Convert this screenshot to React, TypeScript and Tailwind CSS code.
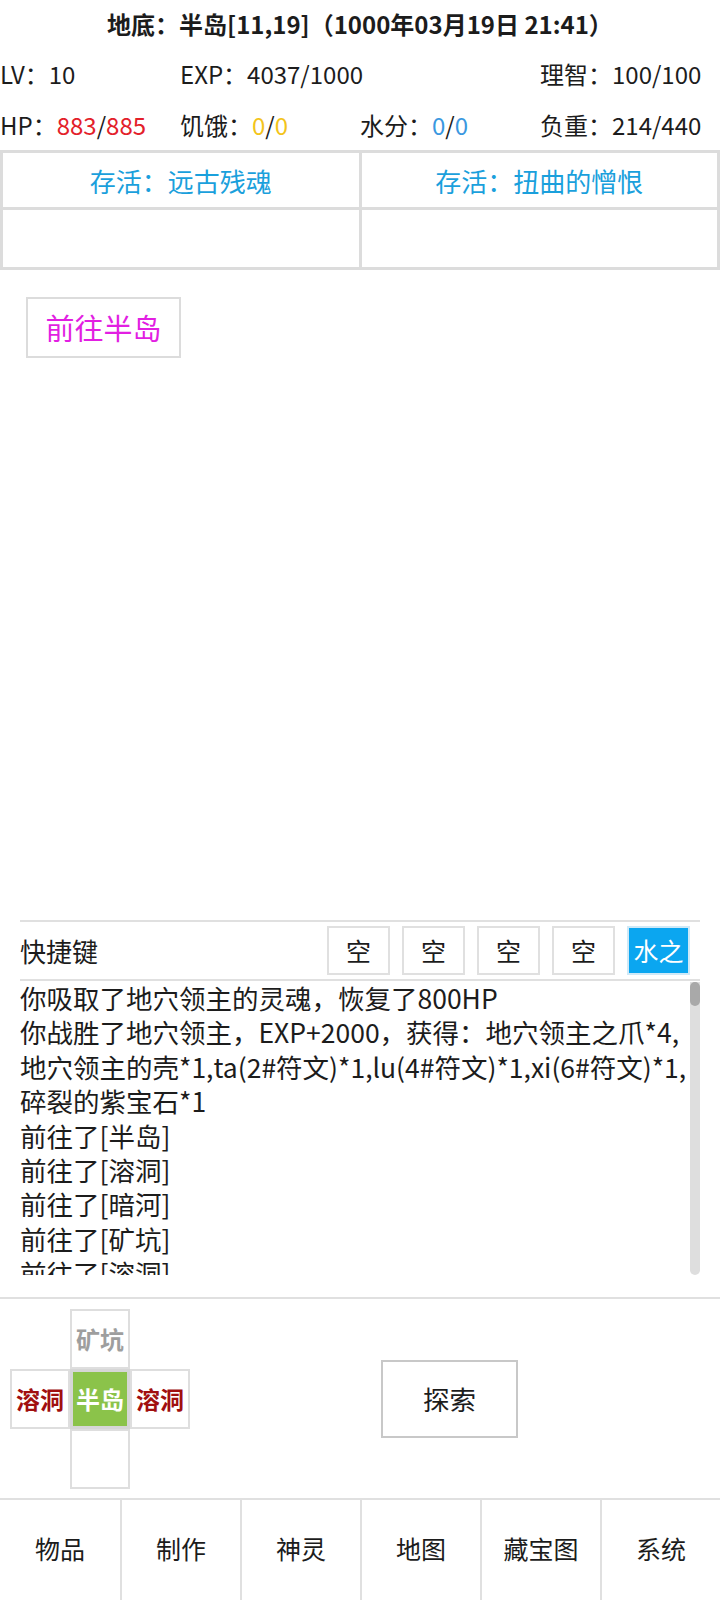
import React from 'react';

const logLines = [
  '你吸取了地穴领主的灵魂，恢复了800HP',
  '你战胜了地穴领主，EXP+2000，获得：地穴领主之爪*4,',
  '地穴领主的壳*1,ta(2#符文)*1,lu(4#符文)*1,xi(6#符文)*1,',
  '碎裂的紫宝石*1',
  '前往了[半岛]',
  '前往了[溶洞]',
  '前往了[暗河]',
  '前往了[矿坑]',
  '前往了[溶洞]',
];

const shortcuts = ['空', '空', '空', '空'];
const navItems = ['物品', '制作', '神灵', '地图', '藏宝图', '系统'];

function Stat({ label, children }: { label: string; children: React.ReactNode }) {
  return (
    <div className="flex items-center whitespace-nowrap">
      <span>{label}：</span>
      {children}
    </div>
  );
}

export default function App() {
  return (
    <div className="h-[1600px] w-[720px] flex flex-col bg-white text-[#1c1c1c] font-['Noto_Sans_CJK_SC','Noto_Sans',sans-serif] overflow-hidden">
      {/* title */}
      <div className="h-[48px] flex items-center justify-center text-[24px] font-bold whitespace-nowrap">
        地底：半岛[11,19]（1000年03月19日 21:41）
      </div>

      {/* stats */}
      <div className="grid grid-cols-4 text-[24px]">
        <div className="h-[51px] flex items-center"><Stat label="LV">10</Stat></div>
        <div className="h-[51px] flex items-center"><Stat label="EXP">4037/1000</Stat></div>
        <div className="h-[51px]" />
        <div className="h-[51px] flex items-center"><Stat label="理智">100/100</Stat></div>
        <div className="h-[51px] flex items-center">
          <Stat label="HP">
            <span className="text-[#e3202a]">883</span>/<span className="text-[#e3202a]">885</span>
          </Stat>
        </div>
        <div className="h-[51px] flex items-center">
          <Stat label="饥饿">
            <span className="text-[#f3c41a]">0</span>/<span className="text-[#f3c41a]">0</span>
          </Stat>
        </div>
        <div className="h-[51px] flex items-center">
          <Stat label="水分">
            <span className="text-[#3a98e0]">0</span>/<span className="text-[#3a98e0]">0</span>
          </Stat>
        </div>
        <div className="h-[51px] flex items-center"><Stat label="负重">214/440</Stat></div>
      </div>

      {/* survival table */}
      <div className="grid grid-cols-2 gap-[3px] p-[3px] bg-[#dcdcdc] text-[26px] text-[#1aa0dc]">
        <div className="h-[54px] bg-white flex items-center justify-center">存活：远古残魂</div>
        <div className="h-[54px] bg-white flex items-center justify-center">存活：扭曲的憎恨</div>
        <div className="h-[57px] bg-white" />
        <div className="h-[57px] bg-white" />
      </div>

      <div className="pt-[27px] pl-[26px]">
        <button className="w-[155px] h-[61px] border-2 border-[#dcdcdc] text-[29px] text-[#e21fe2] flex items-center justify-center">
          前往半岛
        </button>
      </div>

      <div className="flex-1" />

      {/* shortcuts */}
      <div className="mx-[20px] border-t-2 border-b-2 border-[#e0e0e0] h-[61px] flex items-center pr-[10px]">
        <span className="text-[26px] flex-1">快捷键</span>
        <div className="flex gap-[12px]">
          {shortcuts.map((s, i) => (
            <div key={i} className="w-[63px] h-[49px] border-2 border-[#e0e0e0] flex items-center justify-center text-[25px]">
              {s}
            </div>
          ))}
          <div className="w-[63px] h-[49px] border-2 border-[#cfe9f7] bg-[#0ba6f0] text-white flex items-center justify-center text-[25px]">
            水之
          </div>
        </div>
      </div>

      {/* log */}
      <div className="mx-[20px] h-[294px] flex overflow-hidden">
        <div className="flex-1 text-[26.5px] leading-[34.4px] whitespace-nowrap overflow-hidden">
          {logLines.map((l, i) => (
            <div key={i}>{l}</div>
          ))}
        </div>
        <div className="w-[10px] mt-[1px] h-[293px] bg-[#dedede] rounded-b-[5px] flex flex-col">
          <div className="h-[24px] bg-[#a9a9a9] rounded-[5px]" />
        </div>
      </div>

      {/* map + explore */}
      <div className="mt-[22px] border-t-2 border-[#e0e0e0] h-[201px] flex items-center">
        <div className="ml-[10px] grid grid-cols-[60px_60px_60px] grid-rows-[60px_60px_60px] text-[24px] font-bold">
          <div />
          <div className="border-2 border-[#dedede] flex items-center justify-center text-[#9e9e9e]">矿坑</div>
          <div />
          <div className="border-2 border-[#dedede] flex items-center justify-center text-[#a10f0f]">溶洞</div>
          <div className="border-[3px] border-[#d6d6d6] bg-[#8bc34a] flex items-center justify-center text-white">半岛</div>
          <div className="border-2 border-[#dedede] flex items-center justify-center text-[#a10f0f]">溶洞</div>
          <div />
          <div className="border-2 border-[#dedede]" />
          <div />
        </div>
        <button className="ml-[191px] w-[137px] h-[78px] border-2 border-[#c8c8c8] text-[26.5px] flex items-center justify-center">
          探索
        </button>
      </div>

      {/* nav */}
      <div className="h-[102px] border-t-2 border-[#e0e0e0] grid grid-cols-6">
        {navItems.map((n, i) => (
          <div
            key={n}
            className={`flex items-center justify-center pb-[2px] text-[25px] ${i > 0 ? 'border-l-2 border-[#e0e0e0]' : ''}`}
          >
            {n}
          </div>
        ))}
      </div>
    </div>
  );
}
